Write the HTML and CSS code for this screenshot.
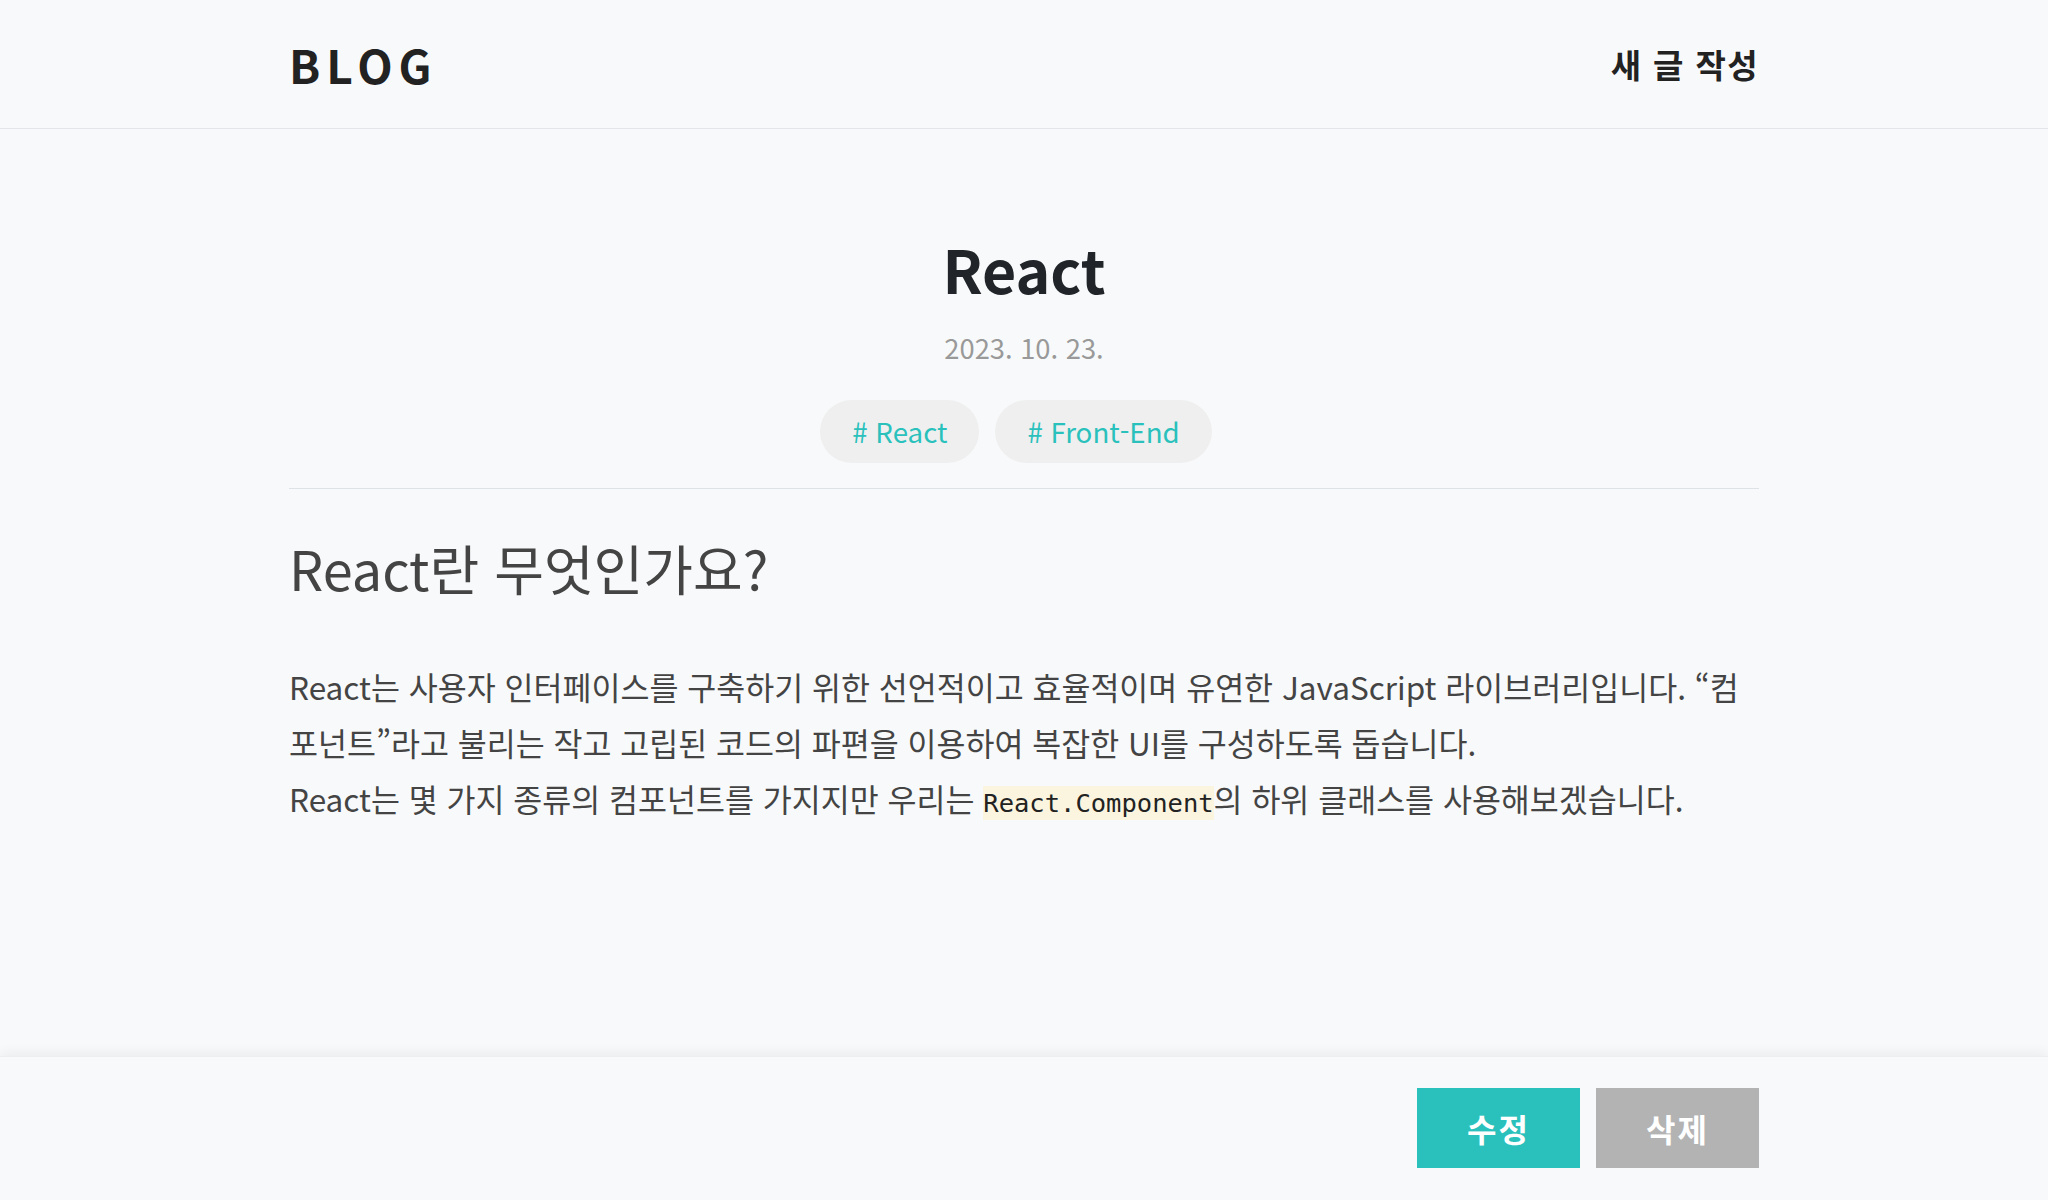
FILE: index.html
```html
<!DOCTYPE html>
<html lang="ko">
<head>
<meta charset="utf-8">
<title>BLOG</title>
<link rel="stylesheet" href="styles.css">
</head>
<body>
<header class="site-header">
  <div class="container header-inner">
    <a class="logo" href="#">BLOG</a>
    <a class="new-post" href="#">새 글 작성</a>
  </div>
</header>
<main class="main">
  <article class="container post">
    <div class="post-head">
      <h1 class="post-title">React</h1>
      <div class="post-date">2023. 10. 23.</div>
      <ul class="tags">
        <li class="tag"># React</li>
        <li class="tag"># Front-End</li>
      </ul>
    </div>
    <div class="post-body">
      <h2 class="post-subtitle">React란 무엇인가요?</h2>
      <p class="post-text">React는 사용자 인터페이스를 구축하기 위한 선언적이고 효율적이며 유연한 JavaScript 라이브러리입니다. “컴포넌트”라고 불리는 작고 고립된 코드의 파편을 이용하여 복잡한 UI를 구성하도록 돕습니다.<br>React는 몇 가지 종류의 컴포넌트를 가지지만 우리는 <code class="code">React.Component</code>의 하위 클래스를 사용해보겠습니다.</p>
    </div>
  </article>
</main>
<footer class="site-footer">
  <div class="container footer-inner">
    <button class="btn btn-edit" type="button">수정</button>
    <button class="btn btn-delete" type="button">삭제</button>
  </div>
</footer>
</body>
</html>
```

FILE: styles.css
```css
* { box-sizing: border-box; }
html, body { margin: 0; padding: 0; }
body {
  background: #f8f9fa;
  font-family: "Noto Sans CJK KR", "Noto Sans", sans-serif;
  color: #212529;
  min-height: 100vh;
  display: flex;
  flex-direction: column;
}
.container {
  width: 1470px;
  margin: 0 auto;
}
.site-header {
  height: 129px;
  border-bottom: 1px solid #e3e5e8;
}
.header-inner {
  height: 100%;
  display: flex;
  align-items: center;
  justify-content: space-between;
}
.logo {
  font-size: 46px;
  font-weight: 700;
  letter-spacing: 6px;
  color: #222;
  text-decoration: none;
  line-height: 1;
}
.new-post {
  font-size: 33px;
  font-weight: 700;
  color: #222;
  text-decoration: none;
  letter-spacing: 1.4px;
  line-height: 1;
}
.main { flex: 1; }
.post-head {
  text-align: center;
  padding-top: 104px;
  padding-bottom: 25px;
  border-bottom: 1px solid #dee2e6;
}
.post-title {
  margin: 0;
  font-size: 59px;
  line-height: 72px;
  font-weight: 700;
  color: #212529;
}
.post-date {
  margin-top: 22px;
  font-size: 27.3px;
  line-height: 40px;
  color: #999;
}
.tags {
  list-style: none;
  margin: 33px 0 0;
  padding: 0;
  display: flex;
  justify-content: center;
}
.tag {
  margin-right: 16px;
  padding: 10px 32px;
  font-size: 27.7px;
  line-height: 43px;
  color: #2ac1bc;
  background: #efefef;
  border-radius: 32px;
}
.post-body { padding-top: 46px; }
.post-subtitle {
  margin: 0;
  font-size: 54px;
  line-height: 66px;
  font-weight: 400;
  color: #444;
}
.post-text {
  margin: 57px 0 0;
  font-size: 31.5px;
  line-height: 56px;
  color: #444;
}
.code {
  font-family: "DejaVu Sans Mono", "Liberation Mono", monospace;
  font-size: 25.5px;
  background: #fbf5e0;
  color: #222;
  padding: 2px 0;
}
.site-footer {
  background: #f8f9fa;
  box-shadow: 0 -3px 12px rgba(0, 0, 0, 0.06);
  border-top: 1px solid #eceef0;
}
.footer-inner {
  display: flex;
  justify-content: flex-end;
  gap: 16px;
  padding: 31px 0 32px;
}
.btn {
  width: 163px;
  height: 80px;
  border: 0;
  border-radius: 0;
  font-family: "Noto Sans CJK KR", sans-serif;
  font-size: 32px;
  font-weight: 700;
  color: #fff;
  letter-spacing: 2px;
  cursor: pointer;
}
.btn-edit { background: #2ac1bc; }
.btn-delete { background: #b3b3b3; }
```
